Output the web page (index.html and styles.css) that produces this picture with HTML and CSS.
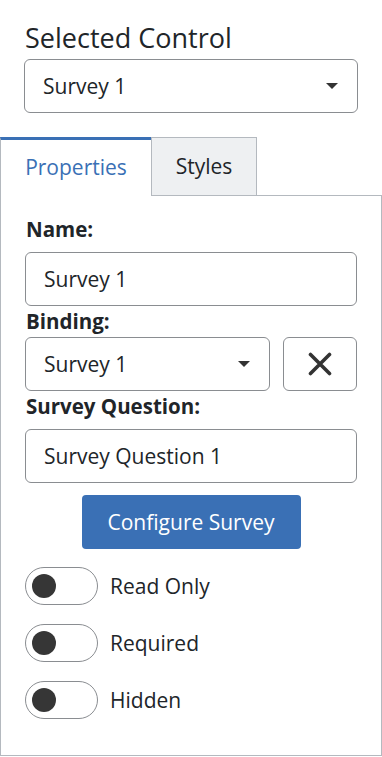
FILE: index.html
```html
<!DOCTYPE html>
<html lang="en">
<head>
  <meta charset="UTF-8" />
  <title>Control Properties</title>
  <link rel="stylesheet" href="styles.css">
</head>
<body>

<!-- Selected control -->
<div class="selected">
  <h2>Selected Control</h2>
  <div class="select">
    <span>Survey 1</span>
    <span class="caret"></span>
  </div>
</div>

<!-- Tabs -->
<div class="tabs">
  <span class="tab active-tab">Properties</span>
  <span class="tab">Styles</span>
  <span class="tab-fill"></span>
</div>

<div class="panel">
  <label class="field-label">Name:</label>
  <div class="input">Survey 1</div>

  <label class="field-label tight">Binding:</label>
  <div class="binding">
    <div class="select">
      <span>Survey 1</span>
      <span class="caret"></span>
    </div>
    <button class="clear-btn">
      <svg width="24" height="24" viewBox="0 0 24 24">
        <path d="M2.5 2.5 L21.5 21.5 M21.5 2.5 L2.5 21.5" stroke="#333" stroke-width="3.6" stroke-linecap="round"/>
      </svg>
    </button>
  </div>

  <label class="field-label">Survey Question:</label>
  <div class="input">Survey Question 1</div>

  <div class="actions">
    <button class="primary-btn">Configure Survey</button>
  </div>

  <div class="toggles">
    <div class="toggle-row">
      <span class="switch"><span class="knob"></span></span>
      <span>Read Only</span>
    </div>
    <div class="toggle-row">
      <span class="switch"><span class="knob"></span></span>
      <span>Required</span>
    </div>
    <div class="toggle-row">
      <span class="switch"><span class="knob"></span></span>
      <span>Hidden</span>
    </div>
  </div>
</div>

</body>
</html>
```
FILE: styles.css
```css
:root {
  --text: #212529;
  --border: #8a8d91;
  --tab-border: #b4b9bf;
  --blue: #3a70b5;
  --font: 'Open Sans', 'Noto Sans', sans-serif;
}

* {
  box-sizing: border-box;
  margin: 0;
  padding: 0;
  font-family: var(--font);
}

body {
  background: #fff;
  color: var(--text);
  width: 382px;
  height: 757px;
  overflow: hidden;
}

/* Selected control */
.selected {
  padding: 20px 24px 0 24px;
}

.selected h2 {
  font-size: 27px;
  font-weight: 400;
  line-height: 36px;
  padding-left: 1px;
  margin-bottom: 3px;
}

.select {
  display: flex;
  align-items: center;
  justify-content: space-between;
  height: 54px;
  border: 1px solid var(--border);
  border-radius: 6px;
  padding: 0 19px 0 18px;
  font-size: 21px;
}

.caret {
  width: 0;
  height: 0;
  border-left: 6px solid transparent;
  border-right: 6px solid transparent;
  border-top: 6px solid #333;
}

/* Tabs */
.tabs {
  display: flex;
  margin-top: 24px;
  height: 59px;
}

.tab {
  display: flex;
  align-items: center;
  justify-content: center;
  font-size: 21px;
  border: 1px solid var(--tab-border);
  border-bottom: none;
}

.active-tab {
  width: 151px;
  color: var(--blue);
  border-top: 3px solid var(--blue);
  border-right: none;
  background: #fff;
  padding-bottom: 3px;
}

.tab:not(.active-tab) {
  width: 106px;
  background: #eef0f2;
  border-bottom: 1px solid var(--tab-border);
  padding-bottom: 1px;
}

.tab-fill {
  flex: 1;
  border-bottom: 1px solid var(--tab-border);
  border-right: 1px solid var(--tab-border);
  align-self: flex-end;
  height: 1px;
}

.panel {
  height: 560px;
  border: 1px solid var(--tab-border);
  border-top: none;
  padding: 19px 24px 0 24px;
}

.field-label {
  display: block;
  font-size: 20.5px;
  font-weight: 700;
  line-height: 28px;
  padding-left: 1px;
  margin-bottom: 9px;
}

.field-label.tight {
  margin-top: 1px;
  margin-bottom: 2px;
}

.input {
  display: flex;
  align-items: center;
  height: 54px;
  border: 1px solid var(--border);
  border-radius: 6px;
  padding: 0 18px;
  font-size: 21px;
}

.binding {
  display: flex;
  gap: 13px;
  margin-bottom: 1px;
}

.binding .select {
  flex: 1;
}

.clear-btn {
  width: 74px;
  height: 54px;
  background: #fff;
  border: 1px solid var(--border);
  border-radius: 6px;
  display: flex;
  align-items: center;
  justify-content: center;
}

.actions {
  display: flex;
  justify-content: center;
  margin-top: 12px;
}

.primary-btn {
  width: 219px;
  height: 54px;
  background: var(--blue);
  color: #fff;
  border: none;
  border-radius: 4px;
  font-size: 21px;
}

.toggles {
  margin-top: 18px;
  display: flex;
  flex-direction: column;
  gap: 19px;
}

.toggle-row {
  display: flex;
  align-items: center;
  gap: 12px;
  font-size: 21px;
}

.switch {
  width: 73px;
  height: 38px;
  border: 1px solid var(--border);
  border-radius: 19px;
  display: flex;
  align-items: center;
  padding-left: 6px;
}

.knob {
  width: 24px;
  height: 24px;
  border-radius: 50%;
  background: #363636;
}
```
